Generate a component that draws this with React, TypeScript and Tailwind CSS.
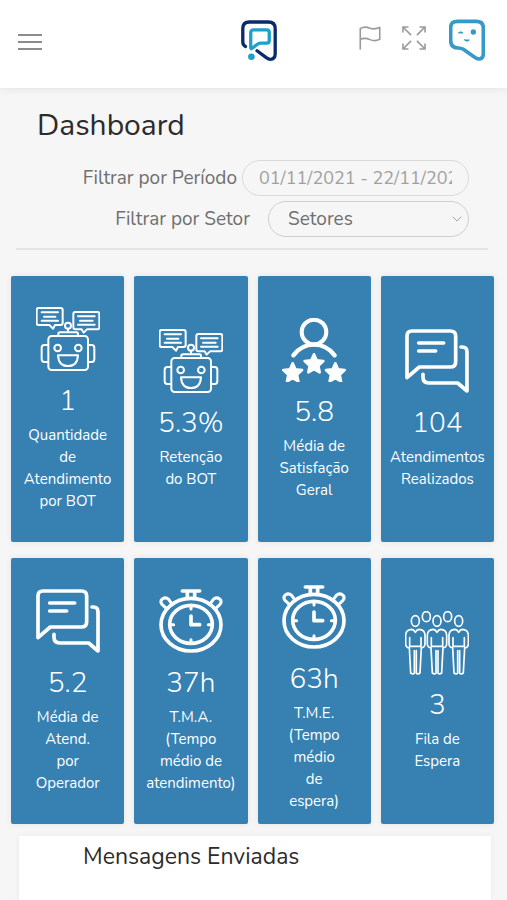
import React, { useState } from 'react';
import { ChevronDown } from 'lucide-react';

const RobotIcon = () => (
  <svg viewBox="0 0 192 192" className="size-16" fill="none" stroke="currentColor" strokeWidth="6" strokeLinecap="round" strokeLinejoin="round" aria-hidden="true">
    <path d="M8 3H74Q80 3 80 9V48Q80 54 74 54H57L51 65L40 54H8Q2 54 2 48V9Q2 3 8 3Z" />
    <path d="M17 16H66M24 29H58M17 41H66" />
    <path d="M118 15H184Q190 15 190 21V61Q190 67 184 67H153L143 77L137 67H118Q112 67 112 61V21Q112 15 118 15Z" />
    <path d="M126 28H176M132 41H170M126 53H176" />
    <circle cx="96" cy="56" r="9" />
    <path d="M96 65V75M67 86V81Q67 76 72 76H121Q126 76 126 81V86" />
    <rect x="37" y="87" width="119" height="102" rx="10" />
    <path d="M36 114H25Q17 114 17 122V157Q17 165 25 165H36M157 114H167Q175 114 175 122V157Q175 165 167 165H157" />
    <circle cx="65" cy="123" r="10" />
    <circle cx="127" cy="123" r="10" />
    <path d="M66 145H126Q124 177 96 177Q68 177 66 145Z" />
  </svg>
);

const STAR = 'M0 -27L8 -9L28 -7L13 7L17 27L0 17L-17 27L-13 7L-28 -7L-8 -9Z';

const RatingIcon = () => (
  <svg viewBox="0 0 192 192" className="size-16" fill="none" stroke="currentColor" strokeLinecap="round" strokeLinejoin="round" aria-hidden="true">
    <circle cx="96" cy="42" r="37" strokeWidth="12" />
    <path d="M34 112Q58 80 96 80Q134 80 158 112" strokeWidth="13" />
    <g fill="currentColor" strokeWidth="8">
      <path d={STAR} transform="translate(96 136)" />
      <path d={STAR} transform="translate(32 163)" />
      <path d={STAR} transform="translate(160 163)" />
    </g>
  </svg>
);

const ChatIcon = () => (
  <svg viewBox="0 0 192 192" className="size-16" fill="none" stroke="currentColor" strokeWidth="11" strokeLinecap="round" strokeLinejoin="round" aria-hidden="true">
    <path d="M6 146V21Q6 6 21 6H136Q152 6 152 21V98Q152 114 136 114H43Z" />
    <path d="M41 42H116M41 66H92" />
    <path d="M168 54H172Q186 54 186 69V186L158 162H71Q54 162 54 145V136" />
  </svg>
);

const StopwatchIcon = () => (
  <svg viewBox="0 0 192 192" className="size-16" fill="none" stroke="currentColor" strokeWidth="11" strokeLinecap="round" strokeLinejoin="round" aria-hidden="true">
    <ellipse cx="96" cy="107" rx="90" ry="79" />
    <ellipse cx="96" cy="106" rx="64" ry="57" />
    <path d="M70 6H122M85 8V25M107 8V25" />
    <path d="M22 58L9 46Q2 37 10 30Q20 23 29 31L38 44M170 58L183 46Q190 37 182 30Q172 23 163 31L154 44" strokeWidth="9" />
    <path d="M96 81V107H122" />
    <path d="M96 50V60M96 152V162M33 107H44M148 107H159" strokeWidth="9" />
  </svg>
);

const Person = ({ x }: { x: number }) => (
  <g transform={`translate(${x} 0)`}>
    <ellipse cx="0" cy="30" rx="12" ry="16" />
    <path d="M0 64Q5 55 11 55Q28 56 29 72V99Q28 110 18 110L14 186Q8 191 3 187V119M0 64Q-5 55 -11 55Q-28 56 -29 72V99Q-28 110 -18 110L-14 186Q-8 191 -3 187V119" />
    <path d="M-17 80V106H17V80" />
  </g>
);

const QueueIcon = () => (
  <svg viewBox="0 0 192 192" className="size-16" fill="none" stroke="currentColor" strokeWidth="5" strokeLinecap="round" strokeLinejoin="round" aria-hidden="true">
    <Person x={31} />
    <Person x={96} />
    <Person x={161} />
    <ellipse cx="64" cy="17" rx="12" ry="15" />
    <ellipse cx="128" cy="17" rx="12" ry="15" />
  </svg>
);

const Logo = () => (
  <svg viewBox="0 0 108 124" className="h-[41px] w-9" fill="none" strokeLinecap="round" strokeLinejoin="round" aria-hidden="true">
    <path d="M13 80Q5 76 5 66V26Q5 6 25 6H82Q103 6 103 26V102Q103 118 88 119Q83 119 76 114L48 93" stroke="#0b2a6b" strokeWidth="10" />
    <path d="M29 85V39Q29 30 38 30H77Q85 30 85 38V62Q85 70 77 70H60Q52 70 47 75L31 87" stroke="#1da1cb" strokeWidth="10" />
    <circle cx="31" cy="111" r="10" fill="#1da1cb" />
  </svg>
);

const Avatar = () => (
  <svg viewBox="0 0 108 124" className="h-[42px] w-9" fill="none" stroke="#3799c5" strokeLinecap="round" strokeLinejoin="round" aria-hidden="true">
    <path d="M25 6H82Q103 6 103 26V103Q103 118 89 119Q84 119 77 114L43 90Q37 86 28 86Q5 86 5 63V26Q5 6 25 6Z" strokeWidth="11" />
    <path d="M29 40Q35 34 41 40Z" fill="#3799c5" strokeWidth="3" />
    <circle cx="73" cy="38" r="8" fill="#3799c5" stroke="none" />
    <path d="M47 62H61Q54 70 47 62Z" fill="#3799c5" strokeWidth="3" />
  </svg>
);

const cards = [
  { icon: <RobotIcon />, value: '1', label: 'Quantidade\nde\nAtendimento\npor BOT' },
  { icon: <RobotIcon />, value: '5.3%', label: 'Retenção\ndo BOT' },
  { icon: <RatingIcon />, value: '5.8', label: 'Média de\nSatisfação\nGeral' },
  { icon: <ChatIcon />, value: '104', label: 'Atendimentos\nRealizados' },
  { icon: <ChatIcon />, value: '5.2', label: 'Média de\nAtend.\npor\nOperador' },
  { icon: <StopwatchIcon />, value: '37h', label: 'T.M.A.\n(Tempo\nmédio de\natendimento)' },
  { icon: <StopwatchIcon />, value: '63h', label: 'T.M.E.\n(Tempo\nmédio\nde\nespera)' },
  { icon: <QueueIcon />, value: '3', label: 'Fila de\nEspera' },
];

const Header = () => (
  <header className="grid h-22 grid-cols-[1fr_auto_1fr] items-center bg-white pr-[22px] pb-2 pl-[18px] shadow-[0_1px_8px_rgba(0,0,0,0.08)]">
    <button type="button" aria-label="Menu" className="justify-self-start pt-1 text-[#8c8c8c]">
      <svg viewBox="0 0 24 18" className="h-[18px] w-6" stroke="currentColor" strokeWidth="2" aria-hidden="true">
        <path d="M0 2H24M0 9H24M0 16H24" />
      </svg>
    </button>
    <a href="#" aria-label="Início" className="ml-[14px]">
      <Logo />
    </a>
    <div className="flex items-center justify-self-end text-[#9b9b9b]">
      <button type="button" aria-label="Avisos" className="mr-[21px] pb-1">
        <svg viewBox="0 0 66 74" className="h-6 w-[22px]" fill="none" stroke="currentColor" strokeWidth="5" strokeLinecap="round" aria-hidden="true">
          <path d="M3 71V8Q16 0 31 6T63 5V41Q48 49 33 42T3 41" />
        </svg>
      </button>
      <button type="button" aria-label="Tela cheia" className="mr-[23px] pb-1">
        <svg viewBox="0 0 74 74" className="size-6" fill="none" stroke="currentColor" strokeWidth="5" aria-hidden="true">
          <path d="M28 28L3 3M3 20V3H20M46 28L71 3M54 3H71V20M28 46L3 71M3 54V71H20M46 46L71 71M71 54V71H54" />
        </svg>
      </button>
      <button type="button" aria-label="Perfil">
        <Avatar />
      </button>
    </div>
  </header>
);

const Filters = () => {
  const [period, setPeriod] = useState('01/11/2021 - 22/11/2021');

  return (
    <div className="mr-[19px] ml-4 flex flex-col items-end gap-[5px] border-b-2 border-[#e5e5e5] pr-[19px] pb-[11px] text-[19px] leading-7 text-[#6f6f6f]">
      <div className="flex items-center gap-[5px]">
        <label htmlFor="period">Filtrar por Período</label>
        <input
          id="period"
          type="text"
          value={period}
          onChange={e => setPeriod(e.target.value)}
          className="h-9 w-[227px] rounded-full border border-[#dadada] px-4 text-lg text-[#a0a0a0]"
        />
      </div>
      <div className="flex items-center gap-[18px]">
        <label htmlFor="sector">Filtrar por Setor</label>
        <div className="relative">
          <select id="sector" className="h-9 w-[201px] appearance-none rounded-full border border-[#cfcfcf] bg-transparent pr-8 pl-[19px]">
            <option>Setores</option>
          </select>
          <ChevronDown className="pointer-events-none absolute top-[10px] right-1 size-4 text-[#a0a0a0]" strokeWidth={1.5} />
        </div>
      </div>
    </div>
  );
};

const App = () => {
  return (
    <div className="min-h-screen bg-[#f6f6f6] font-['Nunito','Open_Sans',sans-serif]">
      <Header />
      <main className="pt-5">
        <h1 className="mb-4 pl-[37px] text-[30px] leading-9 text-[#2b2b2b]">Dashboard</h1>
        <Filters />
        <section className="mt-[26px] grid grid-cols-4 gap-x-[10px] gap-y-4 pr-[13px] pl-[11px]">
          {cards.map((card, index) => (
            <article key={index} className="flex h-[266px] flex-col items-center rounded-xs bg-[#3681b2] py-[27px] text-center text-white shadow-[0_0_6px_rgba(0,0,0,0.08)] [justify-content:safe_center]">
              <div className="shrink-0">{card.icon}</div>
              <p className="mt-3 mb-[5px] text-[28px] leading-9 font-light">{card.value}</p>
              <h2 className="text-[15px] leading-[22px] whitespace-pre-line">{card.label}</h2>
            </article>
          ))}
        </section>
        <section className="mt-3 mr-4 ml-[19px] h-16 bg-white pt-[5px] pl-16 shadow-[0_0_6px_rgba(0,0,0,0.06)]">
          <h2 className="text-[23px] leading-8 text-[#2b2b2b]">Mensagens Enviadas</h2>
        </section>
      </main>
    </div>
  );
};

export default App;
